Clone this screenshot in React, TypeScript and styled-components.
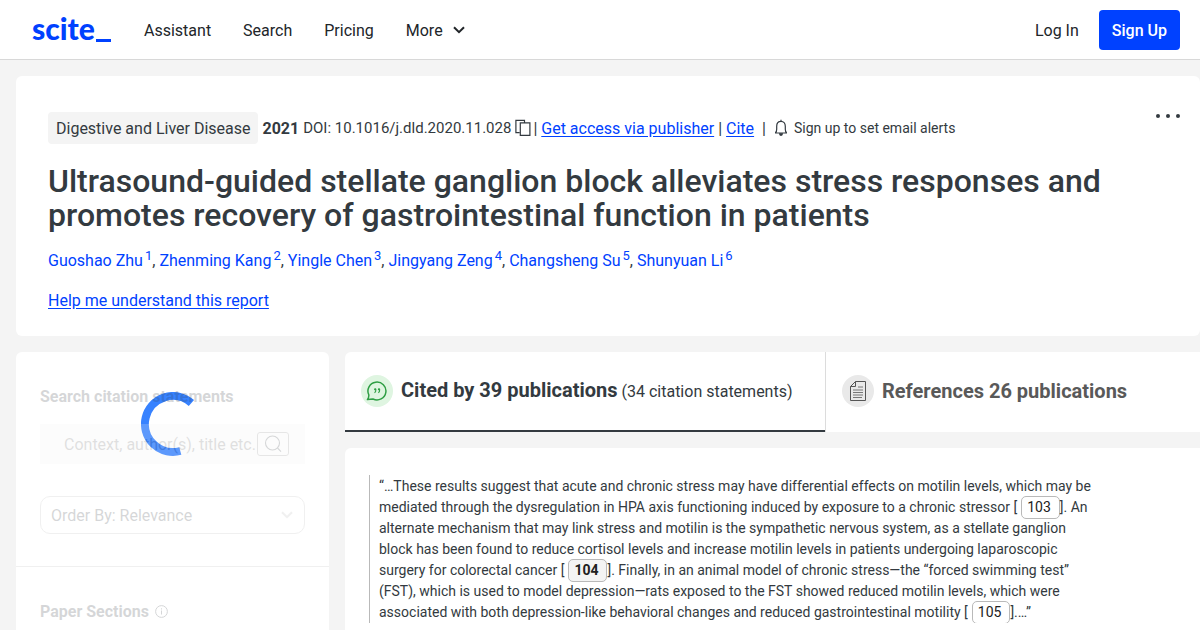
import React from 'react';
import styled, { createGlobalStyle } from 'styled-components';

const blue = '#0041ff';
const ink = '#333a40';
const fog = '#f4f4f4';

const GlobalStyle = createGlobalStyle`
  *, *::before, *::after { box-sizing: border-box; }
  body {
    margin: 0;
    background: ${fog};
    color: ${ink};
    font: 400 16px/25px Roboto, "Liberation Sans", sans-serif;
  }
  button, input, select { font: inherit; color: inherit; }
  svg { display: block; flex: none; }
`;

const Page = styled.div`
  min-height: 100vh;
  display: flex;
  flex-direction: column;
`;

const Header = styled.header`
  display: flex;
  align-items: center;
  justify-content: space-between;
  height: 60px;
  padding: 1px 20px 0 32px;
  background: #fff;
  border-bottom: 1px solid #d8d8d8;
  color: #212529;
`;

const HeaderGroup = styled.div<{ $gap: number }>`
  display: flex;
  align-items: center;
  gap: ${(p) => p.$gap}px;
`;

const Logo = styled.a`
  display: flex;
  align-items: flex-end;
  width: 80px;
  padding-bottom: 4px;
  color: ${blue};
  font: 900 30px/36px Lato, "Liberation Sans", sans-serif;
  text-decoration: none;
`;

const LogoBar = styled.span`
  width: 15px;
  height: 3px;
  margin: 0 0 4px 1px;
  background: currentColor;
`;

const NavLink = styled.a`
  color: inherit;
  text-decoration: none;
`;

const MoreButton = styled.button`
  display: flex;
  align-items: center;
  gap: 10px;
  padding: 0;
  border: 0;
  background: none;
`;

const SignUp = styled.button`
  height: 40px;
  padding: 0 13px;
  border: 0;
  border-radius: 4px;
  background: ${blue};
  color: #fff;
  font-weight: 500;
`;

const Main = styled.main`
  flex: 1;
  display: flex;
  flex-direction: column;
  gap: 16px;
  padding: 16px 0 0 16px;
`;

const PaperCard = styled.section`
  padding: 36px 20px 23px 32px;
  border-radius: 6px;
  background: #fff;
`;

const PaperTop = styled.div`
  display: flex;
  justify-content: space-between;
  align-items: flex-start;
`;

const Meta = styled.div`
  display: flex;
  align-items: center;
  gap: 4px;
  height: 32px;
`;

const Journal = styled.span`
  padding: 4px 8px 3px;
  border-radius: 4px;
  background: ${fog};
`;

const Doi = styled.span`
  font-size: 15px;
`;

const IconButton = styled.button`
  padding: 0;
  border: 0;
  background: none;
`;

const CopyButton = styled(IconButton)`
  margin-right: -2px;
`;

const AlertButton = styled(IconButton)`
  display: flex;
  align-items: center;
  gap: 6px;
  margin-left: 4px;
  font-size: 14px;
`;

const Divider = styled.span<{ $spaced?: boolean }>`
  margin-left: ${(p) => (p.$spaced ? 4 : 0)}px;
`;

const TextLink = styled.a`
  color: ${blue};
  text-underline-offset: 2px;
`;

const Title = styled.h1`
  margin: 20px 0 16px;
  font-size: 32px;
  font-weight: 500;
  line-height: 34px;
`;

const Authors = styled.div`
  margin-bottom: 15px;
`;

const Author = styled.a`
  color: ${blue};
  text-decoration: none;
`;

const Affiliation = styled.sup`
  margin-left: 2px;
  font-size: 13px;
  line-height: 0;
  vertical-align: 6px;
`;

const Columns = styled.div`
  flex: 1;
  display: grid;
  grid-template-columns: 313px minmax(0, 1fr);
  gap: 16px;
`;

const Sidebar = styled.aside`
  position: relative;
  border-radius: 6px 6px 0 0;
  background: #fff;
`;

const Spinner = styled.svg`
  position: absolute;
  top: 40px;
  left: 50%;
  margin-left: -32px;
`;

const Filters = styled.form`
  position: relative;
  opacity: 0.2;
`;

const FilterGroup = styled.div`
  display: flex;
  flex-direction: column;
  gap: 15px;
  padding: 32px 24px;
  & + & {
    padding-bottom: 0;
    border-top: 1px solid #b8b8b8;
  }
`;

const FilterLabel = styled.label`
  display: flex;
  align-items: center;
  gap: 6px;
  font-weight: 700;
`;

const FilterControls = styled.div`
  display: flex;
  flex-direction: column;
  gap: 32px;
`;

const SearchRow = styled.div`
  display: flex;
  align-items: center;
  height: 40px;
  padding: 0 16px 0 24px;
  background: ${fog};
`;

const SearchInput = styled.input`
  flex: 1;
  min-width: 0;
  padding: 1px 0 0;
  border: 0;
  background: none;
  &::placeholder { color: #666; opacity: 1; }
`;

const SearchButton = styled.button`
  display: flex;
  align-items: center;
  justify-content: center;
  width: 32px;
  height: 24px;
  padding: 0;
  border: 1px solid #888;
  border-radius: 3px;
  background: none;
`;

const SelectBox = styled.div`
  display: grid;
  align-items: center;
  color: #b8b8b8;
  & > * { grid-area: 1 / 1; }
  & > svg { justify-self: end; margin-right: 12px; pointer-events: none; }
`;

const Select = styled.select`
  width: 100%;
  height: 38px;
  padding: 1px 10px 0;
  border: 1px solid #b8b8b8;
  border-radius: 10px;
  background: none;
  color: ${ink};
  appearance: none;
`;

const Content = styled.div`
  display: flex;
  flex-direction: column;
  gap: 16px;
`;

const Tabs = styled.div`
  display: flex;
  height: 80px;
  border-radius: 6px 0 0 0;
  background: #fff;
  overflow: hidden;
`;

const Tab = styled.button<{ $active?: boolean }>`
  display: flex;
  align-items: center;
  gap: 8px;
  flex: ${(p) => (p.$active ? '0 0 480px' : '1')};
  padding: ${(p) => (p.$active ? '0 16px' : '0 16px 2px')};
  border: 0 solid ${ink};
  border-bottom-width: ${(p) => (p.$active ? 2 : 0)}px;
  border-left: ${(p) => (p.$active ? '0' : '1px solid #dcdcdc')};
  background: none;
  color: ${(p) => (p.$active ? ink : '#595959')};
  white-space: nowrap;
`;

const TabIcon = styled.span<{ $tint: string }>`
  display: flex;
  align-items: center;
  justify-content: center;
  width: 32px;
  height: 32px;
  border-radius: 50%;
  background: ${(p) => p.$tint};
`;

const TabTitle = styled.span`
  font-size: 20px;
  font-weight: 700;
`;

const Statement = styled.article`
  flex: 1;
  padding: 27px 24px 0;
  border-radius: 6px 0 0 0;
  background: #fff;
`;

const Quote = styled.blockquote`
  max-width: 728px;
  margin: 0;
  padding: 1px 0 0 9px;
  border-left: 1px solid #b9b9b9;
  font-size: 14px;
  line-height: 21px;
  overflow: hidden;
`;

const Ref = styled.a<{ $current?: boolean }>`
  margin-left: 4px;
  padding: 2px 8px 3px 5px;
  border: 1px solid #b9b9b9;
  border-radius: 5px;
  background: ${(p) => (p.$current ? fog : '#fff')};
  color: #212121;
  font-weight: ${(p) => (p.$current ? 700 : 400)};
  text-decoration: none;
`;

const authors = ['Guoshao Zhu', 'Zhenming Kang', 'Yingle Chen', 'Jingyang Zeng', 'Changsheng Su', 'Shunyuan Li'];

const Chevron = () => (
  <svg width="12" height="8" viewBox="0 0 12 8" fill="none" stroke="currentColor" strokeWidth="2">
    <path d="M1 1.2 6 6.2 11 1.2" />
  </svg>
);

const CopyIcon = () => (
  <svg width="16" height="18" viewBox="0 0 16 18" fill="none" stroke="currentColor" strokeWidth="1.2">
    <path d="M4.5 13.6H.9V1.4h8.6v1.9M5.3 3.9h9.6v12.4H5.3z" />
  </svg>
);

const BellIcon = () => (
  <svg width="14" height="18" viewBox="0 0 14 18" fill="none" stroke="currentColor" strokeWidth="1.2">
    <path d="M7 .8v1.6M1 14h12M1.4 13.8c1-.9 1.3-2 1.3-3.6V7.3C2.7 4.3 4.500 2.400 7 2.400s4.300 1.900 4.300 4.900v2.900c0 1.600.3 2.700 1.300 3.600" />
    <path d="M5.600 14.300c0 2.700 2.800 2.700 2.800 0" fill="currentColor" />
  </svg>
);

const SearchIcon = () => (
  <svg width="18" height="18" viewBox="0 0 18 18" fill="none" stroke="currentColor" strokeWidth="1.100">
    <circle cx="8.500" cy="8" r="7" />
    <path d="M13.500 13 17 16.600" />
  </svg>
);

const InfoIcon = () => (
  <svg width="13" height="13" viewBox="0 0 13 13" fill="none" stroke="currentColor">
    <circle cx="6.500" cy="6.500" r="5.900" />
    <path d="M6.500 5.500v4M6.500 3.300v1.200" />
  </svg>
);

const QuoteIcon = () => (
  <svg width="22" height="20" viewBox="0 0 22 20" fill="none" stroke="#2f9e44" strokeWidth="1.500">
    <path d="M2.800 13.800A9 8.900 0 1 1 7 18l-5.600.6c1.200-1.500 1.600-2.900 1.400-4.800z" strokeLinejoin="round" />
    <g strokeWidth="1.100">
      <circle cx="9.200" cy="8.300" r=".6" fill="#2f9e44" />
      <circle cx="13" cy="8.300" r=".6" fill="#2f9e44" />
      <path d="M9.900 8.500c.1 1.800-.4 2.700-1.400 3.200M13.700 8.500c.1 1.800-.4 2.700-1.400 3.200" />
    </g>
  </svg>
);

const DocumentIcon = () => (
  <svg width="16" height="20" viewBox="0 0 16 20" fill="none" stroke="#555">
    <path d="M5.500.5h10v19H.5v-14zM5.500.5v5H.5" />
    <path d="M8 6h5M3 9h10M3 11.500h10M3 14h10M3 16.500h9" stroke="#777" />
  </svg>
);

export default function App() {
  return (
    <Page>
      <GlobalStyle />
      <Header>
        <HeaderGroup $gap={32} as="nav">
          <Logo href="#">scite<LogoBar /></Logo>
          <NavLink href="#assistant">Assistant</NavLink>
          <NavLink href="#search">Search</NavLink>
          <NavLink href="#pricing">Pricing</NavLink>
          <MoreButton type="button">More <Chevron /></MoreButton>
        </HeaderGroup>
        <HeaderGroup $gap={20}>
          <NavLink href="#login">Log In</NavLink>
          <SignUp type="button">Sign Up</SignUp>
        </HeaderGroup>
      </Header>
      <Main>
        <PaperCard>
          <PaperTop>
            <Meta>
              <Journal>Digestive and Liver Disease</Journal>
              <b>2021</b>
              <Doi>DOI: 10.1016/j.dld.2020.11.028</Doi>
              <CopyButton type="button" aria-label="Copy DOI"><CopyIcon /></CopyButton>
              <Divider>|</Divider>
              <TextLink href="#publisher">Get access via publisher</TextLink>
              <Divider>|</Divider>
              <TextLink href="#cite">Cite</TextLink>
              <Divider $spaced>|</Divider>
              <AlertButton type="button"><BellIcon />Sign up to set email alerts</AlertButton>
            </Meta>
            <IconButton type="button" aria-label="More options">
              <svg width="24" height="8" viewBox="0 0 24 8" fill="currentColor">
                <circle cx="2" cy="4" r="2" />
                <circle cx="12" cy="4" r="2" />
                <circle cx="22" cy="4" r="2" />
              </svg>
            </IconButton>
          </PaperTop>
          <Title>
            Ultrasound-guided stellate ganglion block alleviates stress responses and promotes recovery of
            gastrointestinal function in patients
          </Title>
          <Authors>
            {authors.map((name, i) => (
              <React.Fragment key={name}>
                {i > 0 && ', '}
                <Author href="#author">{name}<Affiliation>{i + 1}</Affiliation></Author>
              </React.Fragment>
            ))}
          </Authors>
          <TextLink href="#help">Help me understand this report</TextLink>
        </PaperCard>
        <Columns>
          <Sidebar>
            <Spinner width="64" height="64" viewBox="0 0 64 64" fill="none" stroke="#3782ff" strokeWidth="8">
              <path d="M50.400 10.900A28 28 0 1 0 39.300 59" />
            </Spinner>
            <Filters>
              <FilterGroup>
                <FilterLabel htmlFor="statement-search">Search citation statements</FilterLabel>
                <FilterControls>
                  <SearchRow>
                    <SearchInput id="statement-search" placeholder="Context, author(s), title etc." />
                    <SearchButton type="button" aria-label="Search"><SearchIcon /></SearchButton>
                  </SearchRow>
                  <SelectBox>
                    <Select aria-label="Order by">
                      <option>Order By: Relevance</option>
                    </Select>
                    <Chevron />
                  </SelectBox>
                </FilterControls>
              </FilterGroup>
              <FilterGroup>
                <FilterLabel as="div">Paper Sections <InfoIcon /></FilterLabel>
              </FilterGroup>
            </Filters>
          </Sidebar>
          <Content>
            <Tabs role="tablist">
              <Tab $active type="button" role="tab" aria-selected="true">
                <TabIcon $tint="#dff5e1"><QuoteIcon /></TabIcon>
                <span><TabTitle>Cited by 39 publications</TabTitle> (34 citation statements)</span>
              </Tab>
              <Tab type="button" role="tab" aria-selected="false">
                <TabIcon $tint="#e9e9e9"><DocumentIcon /></TabIcon>
                <TabTitle>References 26 publications</TabTitle>
              </Tab>
            </Tabs>
            <Statement>
              <Quote>
                “…These results suggest that acute and chronic stress may have differential effects on motilin levels,
                which may be mediated through the dysregulation in HPA axis functioning induced by exposure to a chronic
                stressor [<Ref href="#103">103</Ref>]. An alternate mechanism that may link stress and motilin is the
                sympathetic nervous system, as a stellate ganglion block has been found to reduce cortisol levels and
                increase motilin levels in patients undergoing laparoscopic surgery for colorectal cancer
                [<Ref href="#104" $current>104</Ref>]. Finally, in an animal model of chronic stress—the “forced swimming
                test” (FST), which is used to model depression—rats exposed to the FST showed reduced motilin levels,
                which were associated with both depression-like behavioral changes and reduced gastrointestinal motility
                [<Ref href="#105">105</Ref>].…”
              </Quote>
            </Statement>
          </Content>
        </Columns>
      </Main>
    </Page>
  );
}
